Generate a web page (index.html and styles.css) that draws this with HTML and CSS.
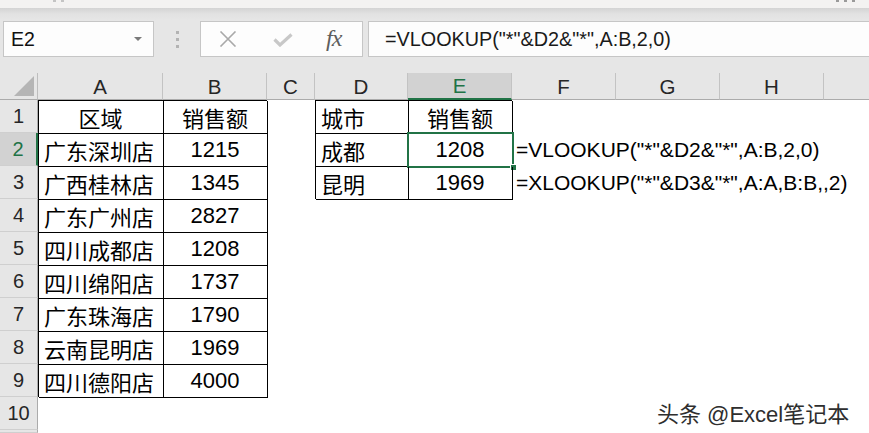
FILE: index.html
```html
<!DOCTYPE html>
<html lang="zh-CN">
<head>
<meta charset="utf-8">
<title>Excel</title>
<link rel="stylesheet" href="styles.css">
</head>
<body>
<div class="app">
  <div class="topstrip">
    <div class="marks left"><i></i><i></i></div>
    <div class="marks right"><i></i><i></i><i></i></div>
  </div>
  <div class="toolbar">
    <div class="namebox">
      <span class="name">E2</span>
      <span class="caret"></span>
    </div>
    <div class="grip"><i></i><i></i><i></i></div>
    <div class="fxbox">
      <svg class="ico-x" width="18" height="16" viewBox="0 0 18 16"><path d="M1.5 0.5 L16.5 15.5 M16.5 0.5 L1.5 15.5" stroke="#a9a9a9" stroke-width="1.6" fill="none"/></svg>
      <svg class="ico-ok" width="20" height="14" viewBox="0 0 20 14"><path d="M1.5 6.5 L7 12 L18.5 1.5" stroke="#c8c8c8" stroke-width="3.2" fill="none"/></svg>
      <span class="fx">fx</span>
    </div>
    <div class="formula">=VLOOKUP("*"&amp;D2&amp;"*",A:B,2,0)</div>
  </div>

  <div class="sheet">
    <!-- header row -->
    <div class="corner"><span class="tri"></span></div>
    <div class="ch">A</div>
    <div class="ch">B</div>
    <div class="ch">C</div>
    <div class="ch">D</div>
    <div class="ch sel">E</div>
    <div class="ch">F</div>
    <div class="ch">G</div>
    <div class="ch">H</div>
    <div class="ch last"></div>

    <!-- row 1 -->
    <div class="rh">1</div>
    <div class="c btl ctr">区域</div>
    <div class="c bt ctr">销售额</div>
    <div class="c"></div>
    <div class="c btl">城市</div>
    <div class="c bt ctr">销售额</div>
    <div class="c"></div><div class="c"></div><div class="c"></div><div class="c"></div>

    <!-- row 2 -->
    <div class="rh rsel">2</div>
    <div class="c bl">广东深圳店</div>
    <div class="c b ctr">1215</div>
    <div class="c"></div>
    <div class="c bl">成都</div>
    <div class="c b ctr active">1208<span class="selbox"><span class="handle"></span></span></div>
    <div class="c over">=VLOOKUP("*"&amp;D2&amp;"*",A:B,2,0)</div>

    <!-- row 3 -->
    <div class="rh">3</div>
    <div class="c bl">广西桂林店</div>
    <div class="c b ctr">1345</div>
    <div class="c"></div>
    <div class="c bl">昆明</div>
    <div class="c b ctr">1969</div>
    <div class="c over">=XLOOKUP("*"&amp;D3&amp;"*",A:A,B:B,,2)</div>

    <!-- row 4 -->
    <div class="rh">4</div>
    <div class="c bl">广东广州店</div>
    <div class="c b ctr">2827</div>
    <div class="c fill"></div>

    <!-- row 5 -->
    <div class="rh">5</div>
    <div class="c bl">四川成都店</div>
    <div class="c b ctr">1208</div>
    <div class="c fill"></div>

    <!-- row 6 -->
    <div class="rh">6</div>
    <div class="c bl">四川绵阳店</div>
    <div class="c b ctr">1737</div>
    <div class="c fill"></div>

    <!-- row 7 -->
    <div class="rh">7</div>
    <div class="c bl">广东珠海店</div>
    <div class="c b ctr">1790</div>
    <div class="c fill"></div>

    <!-- row 8 -->
    <div class="rh">8</div>
    <div class="c bl">云南昆明店</div>
    <div class="c b ctr">1969</div>
    <div class="c fill"></div>

    <!-- row 9 -->
    <div class="rh">9</div>
    <div class="c bl">四川德阳店</div>
    <div class="c b ctr">4000</div>
    <div class="c fill"></div>

    <!-- row 10 -->
    <div class="rh">10</div>
    <div class="c all"></div>

    <!-- row 11 (partial) -->
    <div class="rh"></div>
    <div class="c all"></div>
  </div>

  <div class="watermark">头条 @Excel笔记本</div>
</div>
</body>
</html>
```

FILE: styles.css
```css
* { box-sizing: border-box; }

html, body {
  margin: 0;
  padding: 0;
  background: #ffffff;
}

.app {
  position: relative;
  width: 869px;
  height: 433px;
  overflow: hidden;
  font-family: "Liberation Sans", "Noto Sans CJK SC", sans-serif;
}

.topstrip {
  height: 8px;
  background: #f3f2f1;
  display: flex;
  justify-content: space-between;
  align-items: flex-start;
  padding: 0 14px 0 53px;
}

.marks {
  display: flex;
  gap: 5px;
}

.marks i {
  display: block;
  width: 3px;
  height: 2px;
  background: #9a9a9a;
}

.marks.left i { background: #c4c4c4; }

.toolbar {
  height: 65px;
  background: linear-gradient(#d3d3d3, #e2e2e2 6px, #e6e6e6 12px);
  display: flex;
  align-items: flex-start;
  padding-top: 13px;
  padding-left: 3px;
}

.namebox {
  width: 151px;
  height: 36px;
  background: #fdfdfd;
  border: 1px solid #c6c6c6;
  display: flex;
  align-items: center;
  justify-content: space-between;
  padding: 0 11px 0 7px;
}

.name {
  font-size: 19.5px;
  color: #111;
}

.caret {
  width: 0;
  height: 0;
  border-left: 4px solid transparent;
  border-right: 4px solid transparent;
  border-top: 4px solid #7a7a7a;
}

.grip {
  width: 46px;
  height: 36px;
  display: flex;
  flex-direction: column;
  align-items: center;
  justify-content: center;
  gap: 4px;
}

.grip i {
  display: block;
  width: 3px;
  height: 3px;
  background: #b3b3b3;
}

.fxbox {
  width: 163px;
  height: 36px;
  background: #fdfdfd;
  border: 1px solid #c6c6c6;
  display: flex;
  align-items: center;
  padding-left: 18px;
}

.ico-x { margin-right: 36px; }
.ico-ok { margin-right: 33px; margin-top: 2px; }

.fx {
  font-family: "Liberation Serif", "DejaVu Serif", serif;
  font-style: italic;
  font-size: 24px;
  color: #5e5e5e;
  letter-spacing: -1px;
  margin-top: -2px;
}

.formula {
  flex: 1;
  margin-left: 5px;
  margin-right: -2px;
  height: 36px;
  background: #fdfdfd;
  border: 1px solid #c6c6c6;
  font-size: 19.8px;
  color: #1a1a1a;
  line-height: 34px;
  padding-left: 16px;
  white-space: nowrap;
}

/* sheet grid */
.sheet {
  display: grid;
  grid-template-columns: 38px 125px 104px 48px 93px 104px 104px 104px 104px 1fr;
  grid-template-rows: 27px repeat(10, 33px) 1fr;
  height: 360px;
  background: #ffffff;
}

.corner {
  background: #e6e6e6;
  border-right: 1px solid #bdbdbd;
  border-bottom: 1px solid #ababab;
  display: flex;
  align-items: flex-end;
  justify-content: flex-end;
  padding: 0 3px 3px 0;
}

.tri {
  width: 0;
  height: 0;
  border-left: 20px solid transparent;
  border-bottom: 20px solid #b5b5b5;
}

.ch {
  background: #e6e6e6;
  border-right: 1px solid #c3c3c3;
  border-bottom: 1px solid #ababab;
  display: flex;
  align-items: center;
  justify-content: center;
  font-size: 20.5px;
  color: #262626;
  padding-top: 1px;
}

.ch.sel {
  background: #d2d2d2;
  color: #217346;
  border-bottom: 2px solid #217346;
}

.ch.last { border-right: none; }

.rh {
  background: #e6e6e6;
  border-right: 1px solid #ababab;
  border-bottom: 1px solid #cfcfcf;
  display: flex;
  align-items: center;
  justify-content: center;
  font-size: 20px;
  color: #262626;
}

.rh.rsel {
  background: #d2d2d2;
  color: #217346;
  border-right: 2px solid #217346;
}

.c {
  position: relative;
  display: flex;
  align-items: center;
  padding-left: 6px;
  font-size: 22px;
  color: #000;
  white-space: nowrap;
}

.c.ctr {
  justify-content: center;
  padding-left: 0;
}

.c.fill { grid-column: 4 / -1; }
.c.all { grid-column: 2 / -1; }

.c.over {
  grid-column: 7 / -1;
  padding-left: 4px;
  font-size: 21px;
}

/* table borders: right/bottom drawn just outside, left/top inside */
.b   { box-shadow: 1px 1px 0 #000; }
.bl  { box-shadow: 1px 1px 0 #000, inset 1px 0 0 #000; }
.bt  { box-shadow: 1px 1px 0 #000, inset 0 1px 0 #000; }
.btl { box-shadow: 1px 1px 0 #000, inset 1px 1px 0 #000; }

.selbox {
  position: absolute;
  left: -1px;
  top: -1px;
  right: -2px;
  bottom: -2px;
  border: 2px solid #217346;
}

.handle {
  position: absolute;
  right: -5px;
  bottom: -5px;
  width: 7px;
  height: 7px;
  background: #217346;
  border: 1px solid #ffffff;
}

.watermark {
  position: absolute;
  left: 657px;
  top: 396px;
  font-family: "Liberation Sans", "Noto Sans CJK SC", sans-serif;
  font-size: 22px;
  color: #2e2e2e;
  white-space: nowrap;
  text-shadow: 0 0 2px #fff, 0 0 2px #fff;
}
```
